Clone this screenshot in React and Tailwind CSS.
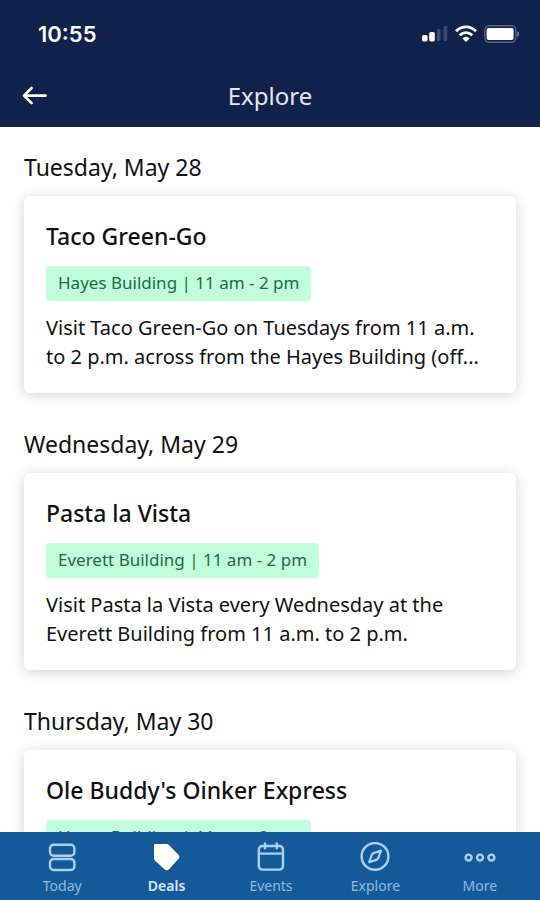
import React from "react";

const DAYS = [
  {
    date: "Tuesday, May 28",
    name: "Taco Green-Go",
    place: "Hayes Building | 11 am - 2 pm",
    text: "Visit Taco Green-Go on Tuesdays from 11 a.m. to 2 p.m. across from the Hayes Building (off...",
  },
  {
    date: "Wednesday, May 29",
    name: "Pasta la Vista",
    place: "Everett Building | 11 am - 2 pm",
    text: "Visit Pasta la Vista every Wednesday at the Everett Building from 11 a.m. to 2 p.m.",
  },
  {
    date: "Thursday, May 30",
    name: "Ole Buddy's Oinker Express",
    place: "Hayes Building | 11 am - 2 pm",
  },
];

function StatusIcons() {
  return (
    <div className="flex items-center gap-[7px]">
      <svg width="26" height="18" viewBox="0 0 26 18" aria-hidden="true">
        <rect x="0" y="10" width="5.6" height="6.4" rx="1.6" fill="#fff" />
        <rect x="7.2" y="7" width="5.6" height="9.4" rx="1.6" fill="#fff" />
        <rect x="15" y="4" width="3.6" height="12" rx="1.2" fill="#3d4a76" />
        <rect x="21.6" y="1" width="3.6" height="15" rx="1.2" fill="#3d4a76" />
      </svg>
      <svg width="22" height="18" viewBox="0 0 22 18" fill="none" stroke="#fff" strokeWidth="2.8" aria-hidden="true">
        <path d="M1 6.2C6.6 0.4 15.4 0.4 21 6.2" />
        <path d="M4.8 10.3C8.4 6.8 13.6 6.8 17.2 10.3" />
        <path d="M11 17l-3.6-3.6c2.1-2.1 5.1-2.1 7.2 0z" fill="#fff" stroke="none" />
      </svg>
      <svg width="36" height="18" viewBox="0 0 36 18" aria-hidden="true">
        <rect x="0.8" y="0.8" width="31" height="16.4" rx="4.5" fill="none" stroke="#56628c" strokeWidth="1.4" />
        <rect x="2.6" y="3" width="27" height="12" rx="2" fill="#fff" />
        <path d="M33.2 6.2c2.6.8 2.6 4.8 0 5.6z" fill="#6d7799" />
      </svg>
    </div>
  );
}

const line = { width: 32, height: 32, viewBox: "0 0 32 32", fill: "none", stroke: "currentColor", strokeWidth: 2.4, "aria-hidden": true };

const TABS = [
  {
    label: "Today",
    icon: (
      <svg {...line}>
        <rect x="4" y="2.8" width="24.4" height="11" rx="3.6" />
        <rect x="4" y="17" width="24.4" height="11" rx="3.6" />
      </svg>
    ),
  },
  {
    label: "Deals",
    active: true,
    icon: (
      <svg {...line}>
        <path d="M4.2 3.2h11.4q.8 0 1.5.7l9.400 9.600q1.200 1.300 0 2.600l-9.500 10.600q-1.200 1-2.400 0L4.900 17.800q-.7-.7-.7-1.600z" fill="currentColor" strokeLinejoin="round" />
      </svg>
    ),
  },
  {
    label: "Events",
    icon: (
      <svg {...line}>
        <rect x="3.8" y="4" width="24.2" height="23.6" rx="3.6" />
        <path d="M3.8 11.6h24.2M10 0.4v6.8M21.8 0.4v6.8" />
      </svg>
    ),
  },
  {
    label: "Explore",
    icon: (
      <svg {...line}>
        <circle cx="16" cy="14.4" r="13.4" />
        <path d="M22 8.6l-7.2 2.400q-1.500.6-2.100 2.100L10.200 20.200l7-2.300q1.500-.6 2.100-2.100z" strokeLinejoin="round" strokeWidth="2.2" />
      </svg>
    ),
  },
  {
    label: "More",
    icon: (
      <svg {...line}>
        <circle cx="4.600" cy="15.600" r="3" />
        <circle cx="16" cy="15.600" r="3" />
        <circle cx="27.400" cy="15.600" r="3" />
      </svg>
    ),
  },
];

export default function App() {
  return (
    <div className="flex h-screen flex-col overflow-hidden bg-white font-['Noto_Sans',sans-serif] text-[#111]">
      <header className="shrink-0 bg-[#10224b] text-white">
        <div className="flex h-16 items-center justify-between pt-1 pr-5 pl-[38px]">
          <span className="font-['Inter',sans-serif] text-[22px] leading-7 font-semibold">10:55</span>
          <StatusIcons />
        </div>
        <div className="grid h-[63px] grid-cols-[1fr_auto_1fr] items-center px-[22px]">
          <button type="button" aria-label="Back" className="w-7">
            <svg width="26" height="20" viewBox="0 0 26 20" fill="none" stroke="currentColor" strokeWidth="2.6" strokeLinecap="round" strokeLinejoin="round">
              <path d="M23.6 9.6H2.5M9.600 2L2 9.600l7.600 7.600" />
            </svg>
          </button>
          <h1 className="text-2xl text-[#e6e8ee]">Explore</h1>
        </div>
      </header>

      <main className="min-h-0 flex-1 space-y-[35px] overflow-hidden px-6 pt-6">
        {DAYS.map((d) => (
          <section key={d.date}>
            <h2 className="mb-[13px] text-[23px] leading-8">{d.date}</h2>
            <article className="rounded-md bg-white px-[22px] pt-6 pb-[22px] shadow-[0_2px_14px_rgba(0,0,0,0.18)]">
              <h3 className="text-[23px] leading-8 font-medium">{d.name}</h3>
              <p className="mt-[14px] w-fit rounded bg-[#c0ffd9] px-3 pb-[2px] text-[17px] leading-[33px] text-[#1d6b4c]">{d.place}</p>
              {d.text && <p className="mt-3 text-xl leading-[29px]">{d.text}</p>}
            </article>
          </section>
        ))}
      </main>

      <nav className="relative grid h-[68px] shrink-0 grid-cols-5 bg-[#155a98] pr-2 pl-[10px]">
        {TABS.map((t) => (
          <a
            key={t.label}
            href="#"
            aria-current={t.active ? "page" : undefined}
            className={t.active ? "flex flex-col items-center pt-[10px] text-white" : "flex flex-col items-center pt-[10px] text-[#a9d0f5]"}
          >
            {t.icon}
            <span className={t.active ? "text-sm leading-6 font-semibold text-[#d5e8fa]" : "text-sm leading-6 text-[#8fbce6]"}>{t.label}</span>
          </a>
        ))}
      </nav>
    </div>
  );
}
